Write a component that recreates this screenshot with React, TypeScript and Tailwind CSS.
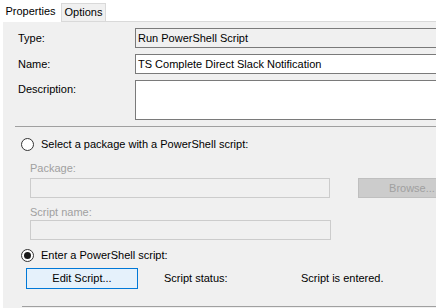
import React from 'react';

const font = { fontFamily: '"Liberation Sans", Arial, sans-serif' };

function Radio({ checked }: { checked?: boolean }) {
  return (
    <span className="flex h-[13px] w-[13px] items-center justify-center rounded-full border border-[#333333] bg-[#ffffff]">
      {checked && <span className="h-[7px] w-[7px] rounded-full bg-[#1a1a1a]" />}
    </span>
  );
}

export default function App() {
  return (
    <div
      className="relative h-[308px] w-[436px] overflow-hidden bg-white text-[11px] text-black"
      style={font}
    >
      {/* tab strip */}
      <div className="flex h-[21px] items-end">
        <div className="z-10 -mb-px flex h-[22px] w-[61px] items-center justify-center bg-white pt-[1px]">
          Properties
        </div>
        <div className="flex h-[18px] w-[45px] items-center justify-center border border-b-0 border-[#d9d9d9] bg-[#f0f0f0]">
          Options
        </div>
      </div>

      <div className="ml-[3px] h-[287px] w-[470px] border-t border-[#d9d9d9] bg-[#f0f0f0]">
        <div className="mt-[6px] flex h-[20px] items-center">
          <span className="w-[132px] pl-[15px]">Type:</span>
          <div className="flex h-[20px] w-[320px] items-center border border-[#7a7a7a] bg-[#f0f0f0] pl-[2px]">
            Run PowerShell Script
          </div>
        </div>

        <div className="mt-[6px] flex h-[20px] items-center">
          <span className="w-[132px] pl-[15px]">Name:</span>
          <div className="flex h-[20px] w-[320px] items-center border border-[#7a7a7a] bg-white pl-[2px]">
            TS Complete Direct Slack Notification
          </div>
        </div>

        <div className="mt-[6px] flex h-[40px] items-start">
          <span className="w-[132px] pl-[15px] pt-[1px]">Description:</span>
          <div className="h-[40px] w-[320px] border border-[#7a7a7a] bg-white" />
        </div>

        <div className="ml-[12px] mt-[6px] h-px bg-[#a0a0a0]" />

        <div className="mt-[10px] flex h-[14px] items-center gap-[7px] pl-[18px]">
          <Radio />
          <span>Select a package with a PowerShell script:</span>
        </div>

        <div className="mt-[11px] pl-[27px] leading-[13px] text-[#a0a0a0]">Package:</div>

        <div className="mt-[3px] flex h-[20px] items-center pl-[27px]">
          <div className="h-[20px] w-[300px] border border-[#cccccc] bg-[#f0f0f0]" />
          <div className="ml-[28px] flex h-[20px] w-[108px] items-center justify-center border border-[#bfbfbf] bg-[#cccccc] text-[#a0a0a0]">
            Browse...
          </div>
        </div>

        <div className="mt-[8px] pl-[27px] leading-[13px] text-[#a0a0a0]">Script name:</div>

        <div className="mt-[1px] flex h-[20px] items-center pl-[27px]">
          <div className="h-[20px] w-[301px] border border-[#cccccc] bg-[#f0f0f0]" />
        </div>

        <div className="mt-[8px] flex h-[14px] items-center gap-[7px] pl-[18px]">
          <Radio checked />
          <span>Enter a PowerShell script:</span>
        </div>

        <div className="mt-[6px] flex h-[21px] items-center">
          <div className="ml-[23px] flex h-[21px] w-[112px] items-center justify-center border border-[#0078d7] bg-[#e5f1fb]">
            Edit Script...
          </div>
          <span className="ml-[26px] w-[137px]">Script status:</span>
          <span>Script is entered.</span>
        </div>

        <div className="ml-[19px] mt-[17px] h-px bg-[#a0a0a0]" />
      </div>
    </div>
  );
}
